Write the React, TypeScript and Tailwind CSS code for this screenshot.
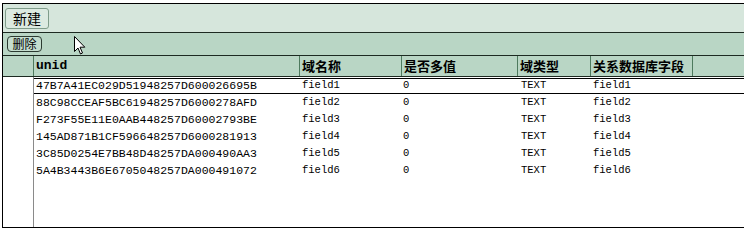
import React from "react";

const rows = [
  ["47B7A41EC029D51948257D600026695B", "field1", "0", "TEXT", "field1"],
  ["88C98CCEAF5BC61948257D6000278AFD", "field2", "0", "TEXT", "field2"],
  ["F273F55E11E0AAB448257D60002793BE", "field3", "0", "TEXT", "field3"],
  ["145AD871B1CF596648257D6000281913", "field4", "0", "TEXT", "field4"],
  ["3C85D0254E7BB48D48257DA000490AA3", "field5", "0", "TEXT", "field5"],
  ["5A4B3443B6E6705048257DA000491072", "field6", "0", "TEXT", "field6"],
];

const mono = { fontFamily: '"Liberation Mono", "DejaVu Sans Mono", monospace' };
const cjk = { fontFamily: '"Noto Sans CJK SC", "Noto Sans", sans-serif' };

export default function App() {
  return (
    <div className="relative w-[744px] h-[231px] overflow-hidden bg-white pt-[3px] pl-[2px]">
      <div className="w-[760px] border border-black">
        {/* toolbar 1 */}
        <div className="h-[29px] bg-[#d6e6dc] border-b border-[#1d2a22] flex items-center pl-[2px]">
          <button
            className="w-[44px] h-[21px] rounded-[3px] border border-[#7f9c8a] bg-[#dceae1] text-[14px] leading-none text-black"
            style={cjk}
          >
            新建
          </button>
        </div>
        {/* toolbar 2 */}
        <div className="h-[23px] bg-[#b9d6c5] border-b border-[#1d2a22] flex items-center pl-[4px]">
          <button
            className="w-[35px] h-[16px] rounded-[4px] border border-[#2b3a31] bg-[#c4ddce] text-[12px] leading-none text-black"
            style={cjk}
          >
            删除
          </button>
        </div>
        {/* header */}
        <div className="h-[21px] bg-[#b9d6c5] border-b border-[#1d2a22] flex items-stretch text-[13px] font-bold text-black">
          <div className="w-[31px] border-r border-[#4e7a5e]" />
          <div className="w-[266px] border-r border-[#4e7a5e] pl-[2px] flex items-center" style={mono}>
            unid
          </div>
          <div className="w-[102px] border-r border-[#4e7a5e] pl-[2px] flex items-center" style={cjk}>
            域名称
          </div>
          <div className="w-[116px] border-r border-[#4e7a5e] pl-[2px] flex items-center" style={cjk}>
            是否多值
          </div>
          <div className="w-[73px] border-r border-[#4e7a5e] pl-[2px] flex items-center" style={cjk}>
            域类型
          </div>
          <div className="w-[102px] border-r border-[#4e7a5e] pl-[2px] flex items-center" style={cjk}>
            关系数据库字段
          </div>
        </div>
        {/* body */}
        <div className="h-[150px] flex">
          <div className="w-[31px] border-r border-[#8a8a8a] shrink-0" />
          <div className="flex-1 pt-[1px] text-[11.5px] text-black" style={mono}>
            {rows.map((r, i) => (
              <div
                key={r[0]}
                className={
                  i === 0
                    ? "h-[16px] flex items-center border-y border-black"
                    : "h-[17px] flex items-center"
                }
              >
                <div className="w-[266px] pl-[2px]">{r[0]}</div>
                <div className="w-[102px] pl-[2px] text-[10.5px]">{r[1]}</div>
                <div className="w-[116px] pl-[1px] text-[10.5px]">{r[2]}</div>
                <div className="w-[73px] pl-[3px] text-[10.5px]">{r[3]}</div>
                <div className="w-[102px] pl-[2px] text-[10.5px]">{r[4]}</div>
              </div>
            ))}
          </div>
        </div>
      </div>
      {/* mouse pointer */}
      <svg className="absolute left-[74px] top-[36px]" width="12" height="19" viewBox="0 0 12 19">
        <path
          d="M0.5 0.5 L0.5 15.5 L4 12 L6.5 18 L8.5 17 L6 11.2 L10.8 11.2 Z"
          fill="white"
          stroke="black"
          strokeWidth="1"
          strokeLinejoin="miter"
        />
      </svg>
    </div>
  );
}
